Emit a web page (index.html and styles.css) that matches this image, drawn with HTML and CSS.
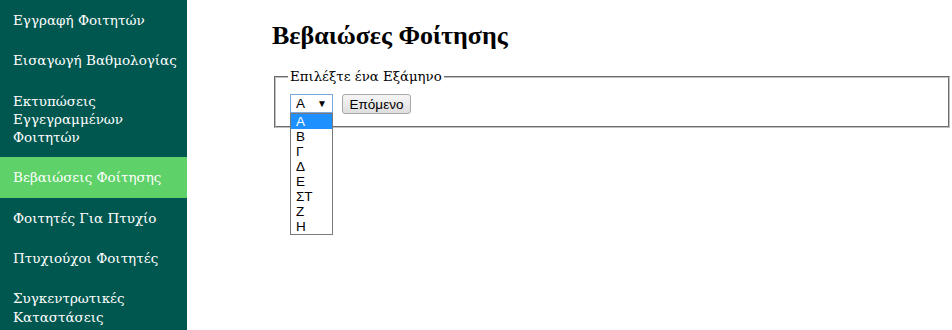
FILE: index.html
```html
<!DOCTYPE html>
<html lang="el">
<head>
<meta charset="utf-8">
<title>Βεβαιώσεις Φοίτησης</title>
<link rel="stylesheet" href="styles.css">
</head>
<body>
<div class="layout">
  <nav class="sidebar">
    <a class="nav-item" href="#">Εγγραφή Φοιτητών</a>
    <a class="nav-item" href="#">Εισαγωγή Βαθμολογίας</a>
    <a class="nav-item" href="#">Εκτυπώσεις Εγγεγραμμένων Φοιτητών</a>
    <a class="nav-item active" href="#">Βεβαιώσεις Φοίτησης</a>
    <a class="nav-item" href="#">Φοιτητές Για Πτυχίο</a>
    <a class="nav-item" href="#">Πτυχιούχοι Φοιτητές</a>
    <a class="nav-item" href="#">Συγκεντρωτικές Καταστάσεις</a>
  </nav>
  <main class="content">
    <h2 class="title">Βεβαιώσες Φοίτησης</h2>
    <fieldset class="box">
      <legend class="legend">Επιλέξτε ένα Εξάμηνο</legend>
      <div class="controls">
        <div class="select-wrap">
          <div class="select">
            <span class="select-value">Α</span>
            <span class="select-arrow">▼</span>
          </div>
          <ul class="dropdown">
            <li class="option selected">Α</li>
            <li class="option">Β</li>
            <li class="option">Γ</li>
            <li class="option">Δ</li>
            <li class="option">Ε</li>
            <li class="option">ΣΤ</li>
            <li class="option">Ζ</li>
            <li class="option">Η</li>
          </ul>
        </div>
        <button class="btn" type="button">Επόμενο</button>
      </div>
    </fieldset>
  </main>
</div>
</body>
</html>
```

FILE: styles.css
```css
html, body {
  margin: 0;
  padding: 0;
  height: 100%;
  background: #ffffff;
}

.layout {
  display: flex;
  min-height: 100%;
}

.sidebar {
  width: 187px;
  flex: 0 0 187px;
  background: #00574f;
  display: flex;
  flex-direction: column;
}

.nav-item {
  display: block;
  padding: 11px 10px 11px 13px;
  font-family: "DejaVu Serif", serif;
  font-size: 13.5px;
  line-height: 18.3px;
  color: #ffffff;
  text-decoration: none;
}

.nav-item.active {
  background: #5ed168;
}

.content {
  flex: 1;
  padding: 0 0 0 85px;
}

.title {
  margin: 21px 0 18px 0;
  font-family: "Liberation Serif", serif;
  font-weight: bold;
  font-size: 26px;
  line-height: 30px;
  color: #000000;
}

.box {
  margin: 0 2px;
  padding: 10px 12px 12px 12px;
  border: 2px groove #c0c0c0;
}

.legend {
  padding: 0 2px;
  font-family: "DejaVu Serif", serif;
  font-size: 13.3px;
  color: #000000;
}

.controls {
  display: flex;
  align-items: flex-start;
  gap: 9px;
  padding-left: 2px;
}

.select-wrap {
  position: relative;
  width: 43px;
}

.select {
  box-sizing: border-box;
  width: 43px;
  height: 19px;
  border: 1px solid #7aa7dc;
  background: #ffffff;
  display: flex;
  align-items: center;
  justify-content: space-between;
  padding: 0 5px 0 5px;
  font-family: "Liberation Sans", Arial, sans-serif;
  font-size: 13.5px;
  color: #000;
}

.select-arrow {
  font-size: 10px;
  line-height: 1;
}

.dropdown {
  position: absolute;
  top: 19px;
  left: 0;
  box-sizing: border-box;
  width: 43px;
  margin: 0;
  padding: 0;
  list-style: none;
  background: #ffffff;
  border: 1px solid #7a7a7a;
  z-index: 10;
}

.option {
  height: 15px;
  line-height: 15px;
  padding-left: 5px;
  font-family: "Liberation Sans", Arial, sans-serif;
  font-size: 13.5px;
  color: #000000;
}

.option.selected {
  background: #1e90ff;
  color: #ffffff;
}

.btn {
  box-sizing: border-box;
  height: 20px;
  width: 69px;
  padding: 0;
  border: 1px solid #a9a9a9;
  border-radius: 3px;
  background: linear-gradient(#f6f6f6, #dedede);
  font-family: "Liberation Sans", Arial, sans-serif;
  font-size: 13.5px;
  color: #000000;
}
```
